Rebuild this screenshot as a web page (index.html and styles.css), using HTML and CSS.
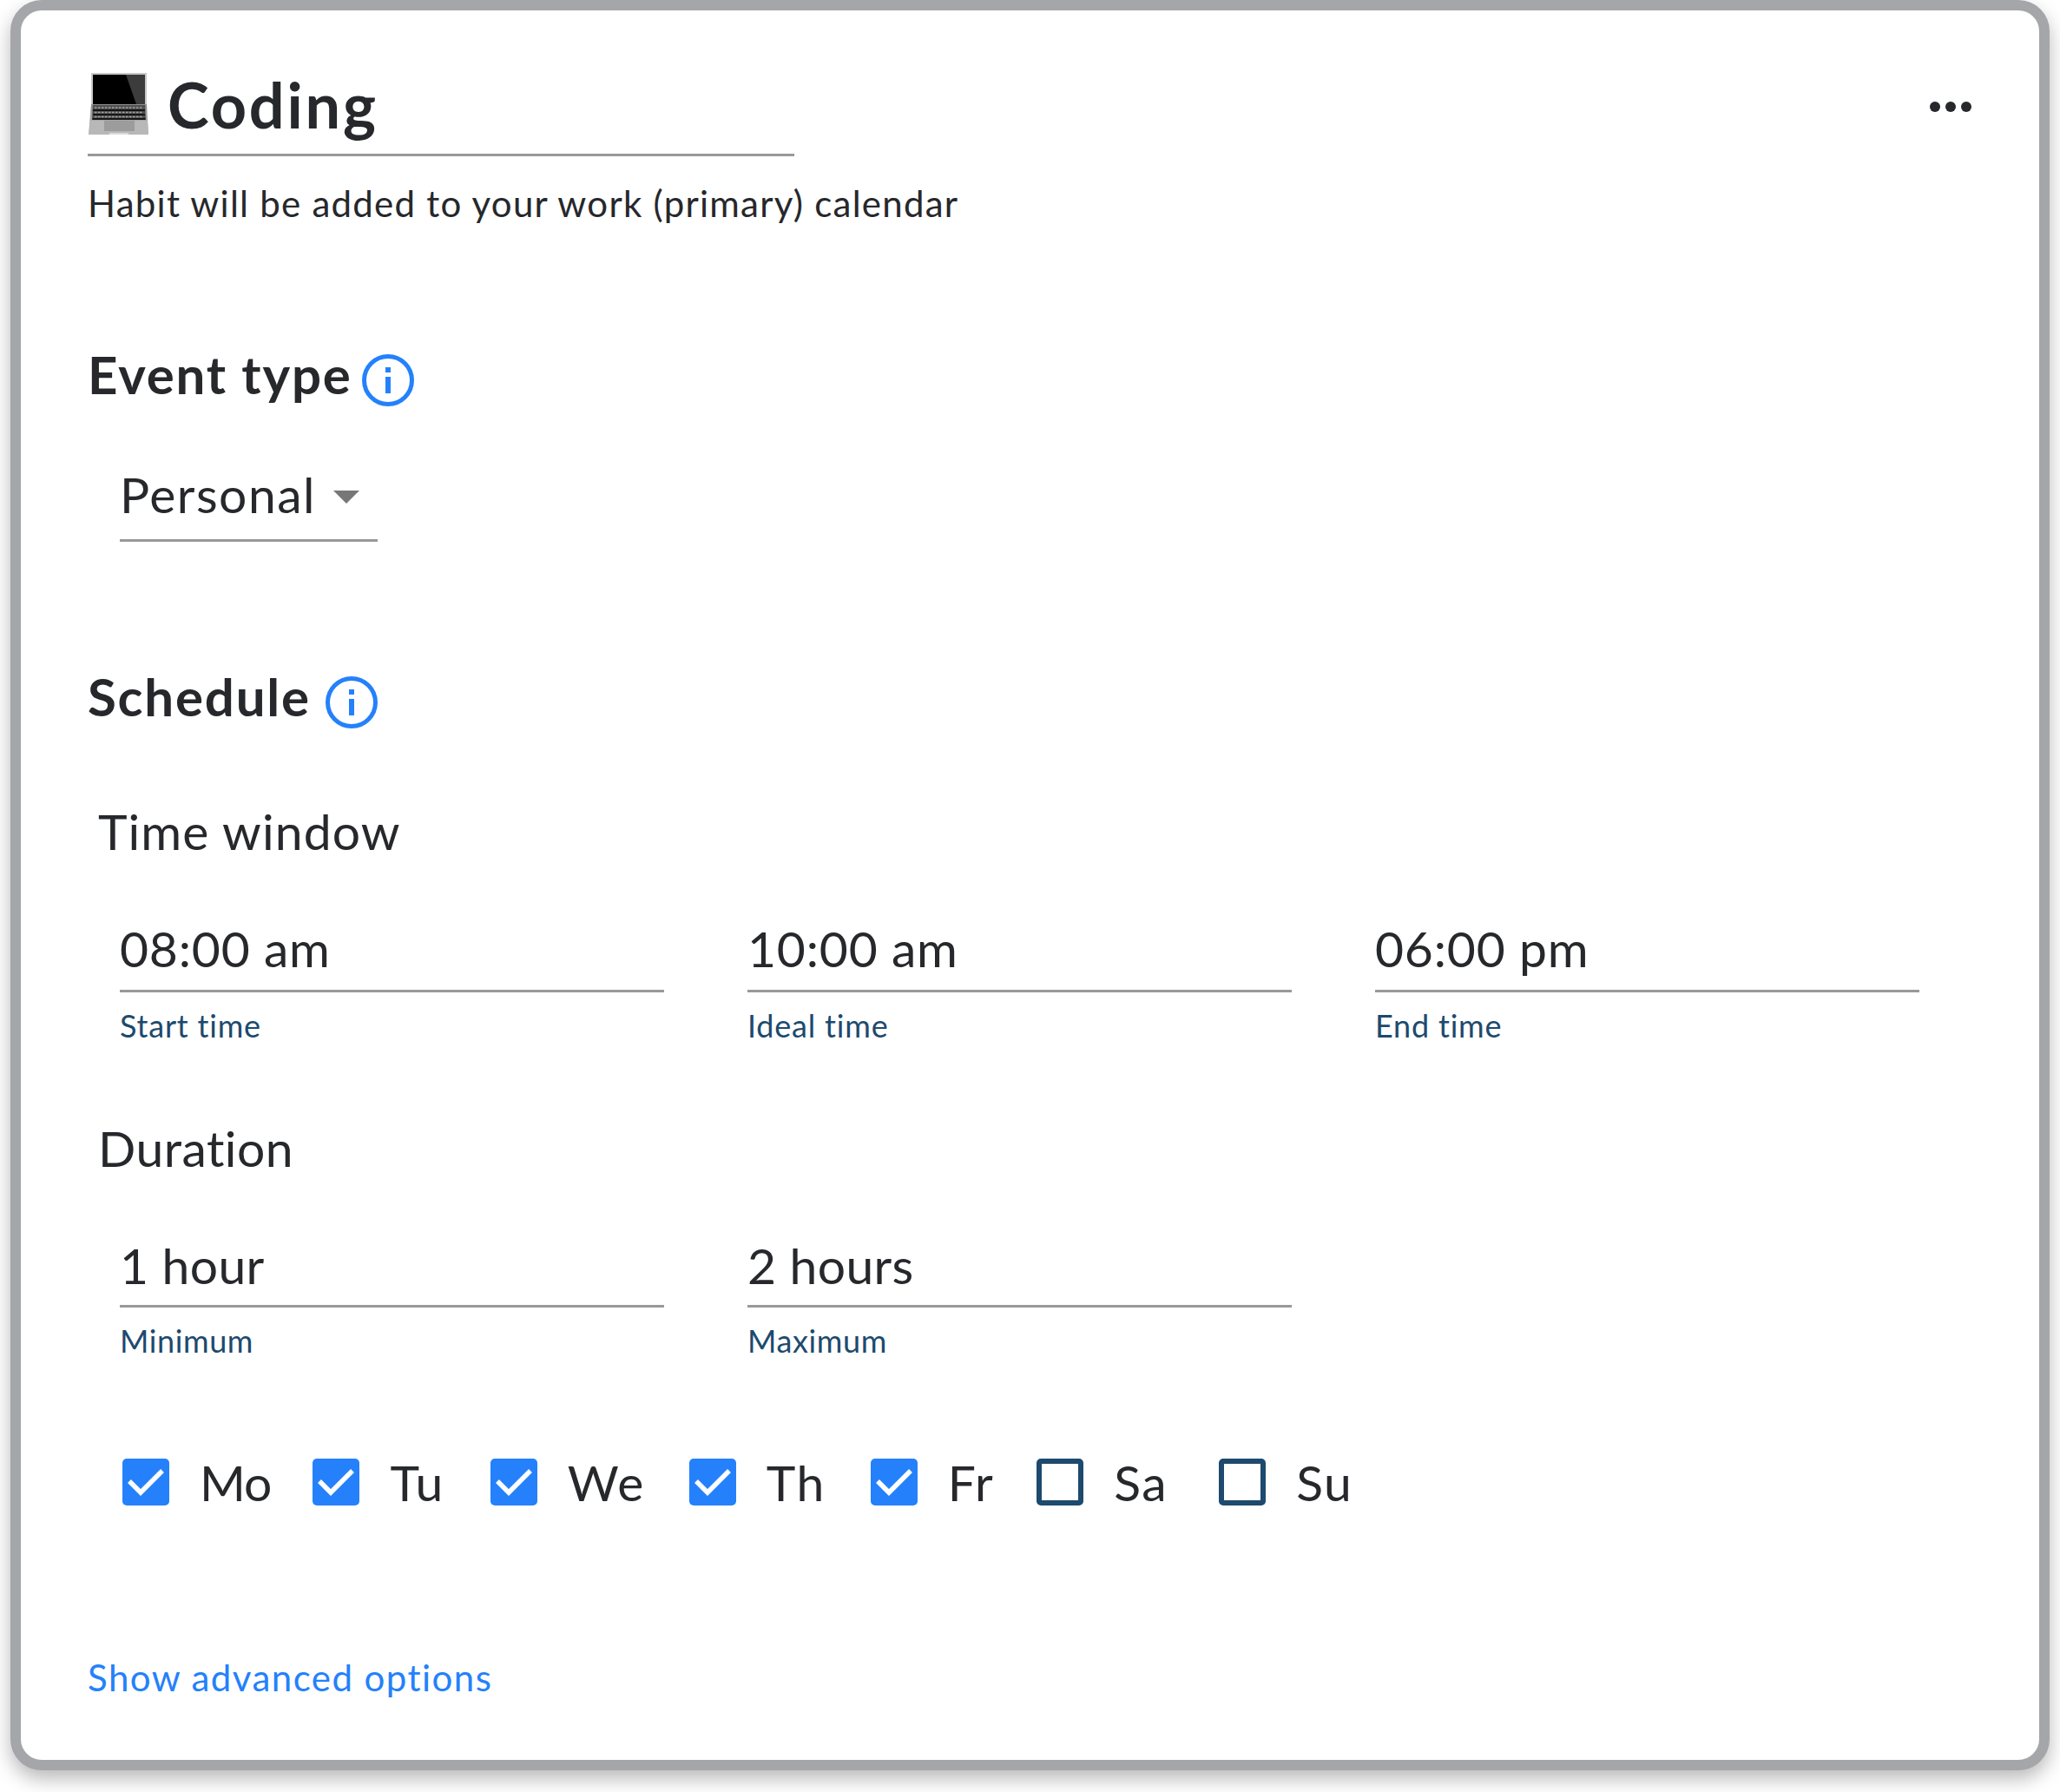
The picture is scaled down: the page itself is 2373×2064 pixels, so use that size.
FILE: index.html
```html
<!DOCTYPE html>
<html lang="en">
<head>
<meta charset="utf-8">
<title>Coding habit</title>
<link rel="stylesheet" href="styles.css">
</head>
<body>
<main class="card">
  <header class="header">
    <div class="title-block">
      <svg class="laptop" viewBox="0 0 69 71" aria-hidden="true">
        <defs>
          <linearGradient id="deck" x1="0" y1="0" x2="0" y2="1"><stop offset="0" stop-color="#8f8f8f"/><stop offset="1" stop-color="#bcbcbc"/></linearGradient>
        </defs>
        <path d="M3 0H67V38H3Z" fill="#c8c8c8"/>
        <path d="M5 2H65V36H5Z" fill="#000"/>
        <path d="M43 2H65V36H55Z" fill="#3c3c3c"/>
        <path d="M3 36H67L69 71H0Z" fill="url(#deck)"/>
        <path d="M5 37H65L66 54H4Z" fill="#505050"/>
        <path d="M5 43H65M5 48H65M4.500 53H65.500" stroke="#151515" stroke-width="2"/>
        <path d="M7 40H63M7 45.500H63M7 50.500H63" stroke="#a0a0a0" stroke-width="1.500" stroke-dasharray="2.500 1.500"/>
        <path d="M2 55H68L69 71H0Z" fill="#b8b8b8"/>
        <path d="M18 55H53V67H18Z" fill="#9c9c9c"/>
        <path d="M24 70H46" stroke="#e6e6e6" stroke-width="1.500"/>
      </svg>
      <h1 class="title">Coding</h1>
    </div>
    <div class="more" aria-label="More options"><span class="dot"></span><span class="dot"></span><span class="dot"></span></div>
  </header>
  <p class="subtitle">Habit will be added to your work (primary) calendar</p>

  <h2 class="section section-event">Event type
    <svg class="info" viewBox="0 0 60 60" aria-hidden="true"><circle cx="30" cy="30" r="27.500" fill="none" stroke="#2481fb" stroke-width="5"/><rect x="27" y="15" width="6" height="6" fill="#2481fb"/><rect x="27" y="26" width="6" height="19" fill="#2481fb"/></svg>
  </h2>
  <div class="select"><span class="select-value">Personal</span><span class="caret"></span></div>

  <h2 class="section section-schedule">Schedule
    <svg class="info" viewBox="0 0 60 60" aria-hidden="true"><circle cx="30" cy="30" r="27.500" fill="none" stroke="#2481fb" stroke-width="5"/><rect x="27" y="15" width="6" height="6" fill="#2481fb"/><rect x="27" y="26" width="6" height="19" fill="#2481fb"/></svg>
  </h2>

  <h3 class="group group-window">Time window</h3>
  <div class="fields">
    <div class="field"><div class="value">08:00 am</div><div class="hint">Start time</div></div>
    <div class="field"><div class="value">10:00 am</div><div class="hint">Ideal time</div></div>
    <div class="field"><div class="value">06:00 pm</div><div class="hint">End time</div></div>
  </div>

  <h3 class="group group-duration">Duration</h3>
  <div class="fields fields-duration">
    <div class="field"><div class="value">1 hour</div><div class="hint">Minimum</div></div>
    <div class="field"><div class="value">2 hours</div><div class="hint">Maximum</div></div>
  </div>

  <div class="days">
    <label class="day day-mo"><span class="box on"><svg viewBox="0 0 54 54"><path d="M8 26L21 39L46 14" fill="none" stroke="#fff" stroke-width="5.500"/></svg></span><span class="day-name">Mo</span></label>
    <label class="day day-tu"><span class="box on"><svg viewBox="0 0 54 54"><path d="M8 26L21 39L46 14" fill="none" stroke="#fff" stroke-width="5.500"/></svg></span><span class="day-name">Tu</span></label>
    <label class="day day-we"><span class="box on"><svg viewBox="0 0 54 54"><path d="M8 26L21 39L46 14" fill="none" stroke="#fff" stroke-width="5.500"/></svg></span><span class="day-name">We</span></label>
    <label class="day day-th"><span class="box on"><svg viewBox="0 0 54 54"><path d="M8 26L21 39L46 14" fill="none" stroke="#fff" stroke-width="5.500"/></svg></span><span class="day-name">Th</span></label>
    <label class="day day-fr"><span class="box on"><svg viewBox="0 0 54 54"><path d="M8 26L21 39L46 14" fill="none" stroke="#fff" stroke-width="5.500"/></svg></span><span class="day-name">Fr</span></label>
    <label class="day day-sa"><span class="box"></span><span class="day-name">Sa</span></label>
    <label class="day day-su"><span class="box"></span><span class="day-name">Su</span></label>
  </div>

  <a class="advanced" href="#">Show advanced options</a>
</main>
</body>
</html>
```
FILE: styles.css
```css
* { box-sizing: border-box; }
html, body { margin: 0; background: #fff; }
body { font-family: "Lato", "Open Sans", sans-serif; color: #26282b; width: 2373px; height: 2064px; overflow: hidden; }

.card {
  margin: 0 12px;
  width: 2349px;
  height: 2039px;
  border: 12px solid #a5a6aa;
  border-radius: 36px;
  background: #fff;
  padding: 60px 78px 0 77px;
  box-shadow: 0 10px 22px rgba(0, 0, 0, .28);
}

.header { display: flex; justify-content: space-between; align-items: flex-start; }
.title-block { width: 814px; height: 108px; border-bottom: 3px solid #999; display: flex; align-items: flex-start; }
.laptop { width: 69px; height: 71px; margin: 12px 0 0 1px; flex: none; }
.title { margin: 0 0 0 22px; font-size: 72px; line-height: 96px; font-weight: 700; letter-spacing: 2.8px; }
.more { display: flex; gap: 6px; margin-top: 45px; }
.dot { width: 12px; height: 12px; border-radius: 50%; background: #26282b; }

.subtitle { margin: 24px 0 0; font-size: 42px; line-height: 60px; font-weight: 400; letter-spacing: 1.25px; }

.section { display: flex; align-items: flex-start; margin: 0; height: 60px; font-size: 60px; font-weight: 700; line-height: 48px; letter-spacing: 1.8px; }
.section-event { margin-top: 143px; gap: 11px; }
.section-schedule { margin-top: 154px; gap: 17px; }
.info { width: 60px; height: 60px; flex: none; margin-top: 1px; }

.select { margin: 63px 0 0 37px; width: 297px; height: 94px; padding-bottom: 14px; border-bottom: 3px solid #999; display: flex; align-items: center; gap: 20px; }
.select-value { font-size: 57px; line-height: 70px; letter-spacing: 1.5px; }
.caret { width: 0; height: 0; border-left: 15px solid transparent; border-right: 15px solid transparent; border-top: 15px solid #777; margin-top: 7px; }

.group { margin: 0 0 0 12px; font-size: 57px; line-height: 72px; font-weight: 400; letter-spacing: 1.1px; }
.group-window { margin-top: 83px; }
.group-duration { margin-top: 81px; letter-spacing: .5px; }

.fields { display: grid; grid-template-columns: repeat(3, 627px); column-gap: 96px; margin: 64px 0 0 37px; }
.value { font-size: 57px; line-height: 70px; height: 86px; border-bottom: 3px solid #999; letter-spacing: .8px; }
.hint { margin-top: 14px; font-size: 36px; line-height: 48px; color: #1d4a6e; letter-spacing: .8px; }
.fields-duration .value { height: 84px; letter-spacing: .4px; }
.fields-duration .hint { margin-top: 14px; letter-spacing: .6px; }

.days { display: flex; margin: 112px 0 0 40px; height: 54px; }
.day { display: flex; align-items: center; gap: 35px; font-size: 57px; line-height: 54px; letter-spacing: 1.5px; }
.day-mo { margin-right: 48px; letter-spacing: -1px; }
.day-tu { margin-right: 53px; }
.day-we { margin-right: 51px; }
.day-th { margin-right: 52px; }
.day-fr { margin-right: 49px; }
.day-sa { margin-right: 59px; }
.box { width: 54px; height: 54px; border-radius: 5px; border: 6px solid #1d4a6e; flex: none; display: block; }
.box.on { border: 0; background: #2481fb; }
.box svg { display: block; width: 54px; height: 54px; }

.advanced { display: block; margin-top: 168px; font-size: 42px; line-height: 60px; color: #2481fb; text-decoration: none; letter-spacing: 1.45px; }
```
